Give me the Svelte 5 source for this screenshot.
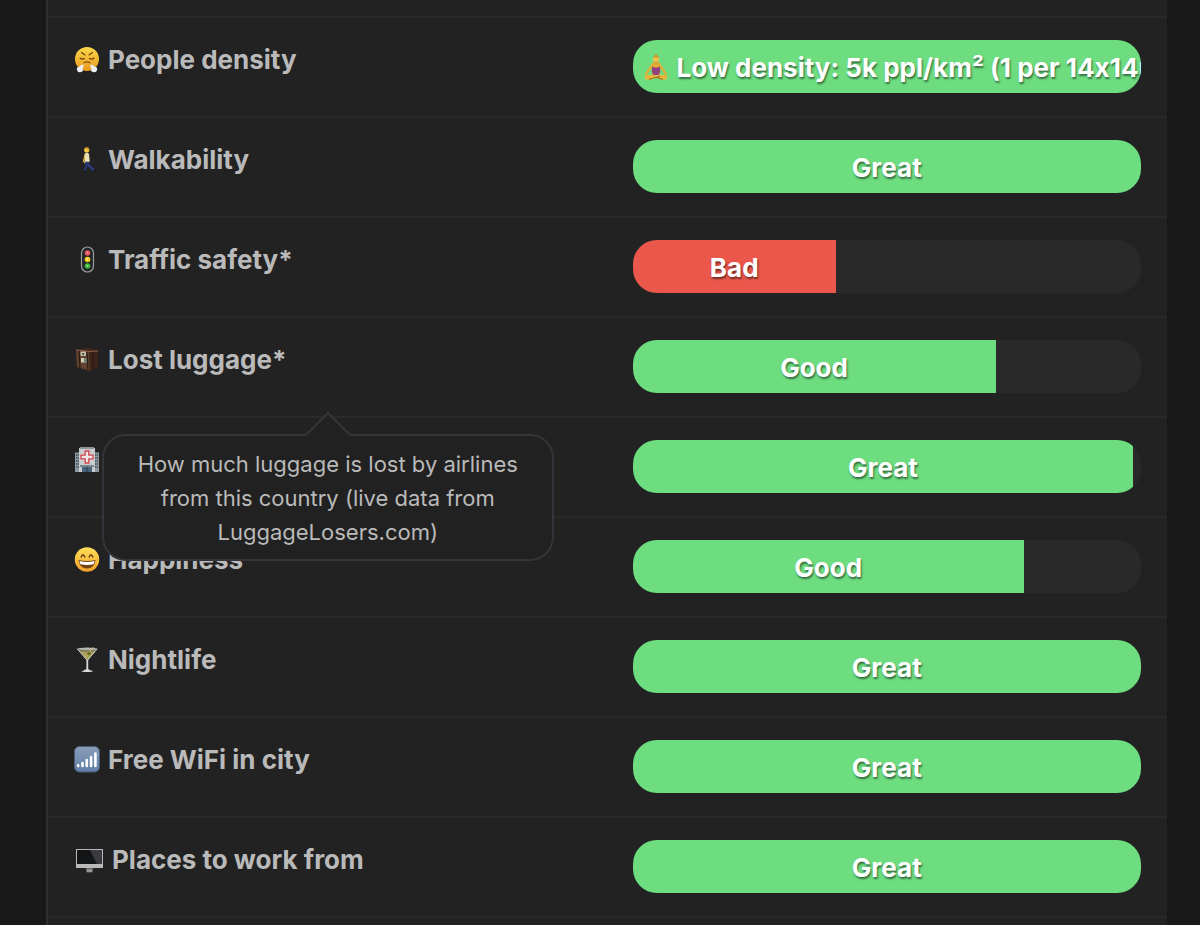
<script>
    // Scores shown in the table; width is the filled part of the bar in percent
    const rows = [
        { icon: "huff", label: "People density", width: 100, color: "green", value: "Low density: 5k ppl/km² (1 per 14x14m)", valueIcon: true },
        { icon: "walk", label: "Walkability", width: 100, color: "green", value: "Great" },
        { icon: "traffic", label: "Traffic safety*", width: 40, color: "red", value: "Bad" },
        {
            icon: "luggage",
            label: "Lost luggage*",
            width: 71.4,
            color: "green",
            value: "Good",
            tip: "How much luggage is lost by airlines from this country (live data from LuggageLosers.com)"
        },
        { icon: "hospital", label: "Healthcare", width: 98.5, color: "green", value: "Great" },
        { icon: "smile", label: "Happiness", width: 77, color: "green", value: "Good" },
        { icon: "cocktail", label: "Nightlife", width: 100, color: "green", value: "Great" },
        { icon: "signal", label: "Free WiFi in city", width: 100, color: "green", value: "Great" },
        { icon: "desktop", label: "Places to work from", width: 100, color: "green", value: "Great" }
    ];
</script>

{#snippet icon(name)}
    <svg class="icon" class:wide={name === "desktop"} viewBox={name === "desktop" ? "0 0 30 28" : "0 0 26 28"} aria-hidden="true">
        {#if name === "huff"}
            <defs>
                <linearGradient id="huff-face" x1="0" y1="0" x2="0" y2="1">
                    <stop offset="0" stop-color="#fbd84a" />
                    <stop offset="1" stop-color="#e9991f" />
                </linearGradient>
            </defs>
            <circle cx="13" cy="13" r="12" fill="url(#huff-face)" />
            <path d="M7.5 6.5 L11 9 M18.5 6.5 L15 9" stroke="#6b3d0c" stroke-width="1.1" stroke-linecap="round" fill="none" />
            <path d="M6 12 Q8 13.8 10.5 12.6 M20 12 Q18 13.8 15.5 12.6" stroke="#6b3d0c" stroke-width="1.1" stroke-linecap="round" fill="none" />
            <path d="M9.5 17 Q13 14.8 16.5 17" stroke="#8a5210" stroke-width="1.2" fill="none" />
            <path d="M9.5 18.5 Q10 21 8.5 22.5 Q10 25.5 7 26 Q3.5 27 3 24 Q2 21 5.5 20.8 Q6 19 9.5 18.5Z" fill="#eceff5" />
            <path d="M16.5 18.5 Q16 21 17.5 22.5 Q16 25.5 19 26 Q22.5 27 23 24 Q24 21 20.5 20.8 Q20 19 16.5 18.5Z" fill="#eceff5" />
        {:else if name === "walk"}
            <path d="M13 14 L14.5 19 L20 24.5" stroke="#2b3f86" stroke-width="2.2" fill="none" />
            <path d="M11.5 14 L12.5 20 L10.5 25" stroke="#26366f" stroke-width="2.4" fill="none" />
            <path d="M10 25.8 H13 M19 25.8 L21.5 24.2" stroke="#17181c" stroke-width="1.4" />
            <path d="M10.5 8 Q13 5.5 15 8 L15.8 15.8 H10.5 Z" fill="#e9dfb8" />
            <path d="M11 9 L9.5 15 L11 17" stroke="#e9bd35" stroke-width="1.2" fill="none" />
            <circle cx="12.7" cy="4" r="2.6" fill="#f3c73c" />
            <path d="M11 2.3 Q13 -.2 15.2 2.5 V4.5 L13.8 3Z" fill="#b98a1d" />
        {:else if name === "traffic"}
            <rect x="7.5" y="1" width="12" height="25" rx="6" fill="#24272a" stroke="#9a9e9c" stroke-width="1.2" />
            <circle cx="13.5" cy="7" r="2.8" fill="#e7505b" />
            <circle cx="13.5" cy="13.5" r="2.8" fill="#f4cc1e" />
            <circle cx="13.5" cy="20" r="2.8" fill="#39b63b" />
            <circle cx="13.5" cy="6.7" r="1" fill="#ff9ea4" />
            <circle cx="13.5" cy="13.2" r="1" fill="#fff08a" />
            <circle cx="13.5" cy="19.7" r="1" fill="#9bea8d" />
        {:else if name === "luggage"}
            <path d="M2 4 L15 2 L24 5 L24 21 L16 25 L3 21 Z" fill="#4a2a1c" />
            <path d="M2 4 L15 5.5 L16 25 L3 21 Z" fill="#60402f" />
            <path d="M15 5.5 L24 5 L24 21 L16 25 Z" fill="#3d2318" />
            <path d="M5 4.5 L6 22 M13 5.5 L14 24.3 M19 5.5 V23.5" stroke="#281711" stroke-width="1.1" />
            <path d="M2 4 L15 5.5 L24 5" stroke="#8b6249" fill="none" />
            <rect x="6.5" y="5.5" width="5.5" height="4.5" rx="1" fill="#c5c2a9" />
            <rect x="8.2" y="7" width="2" height="2" fill="#39524b" />
            <rect x="7" y="12" width="3" height="4.5" fill="#d8cbb6" />
            <rect x="10.2" y="12" width="2.5" height="5" fill="#6b8b78" />
        {:else if name === "hospital"}
            <path d="M1 6.5 H6 V26 H1Z M20 6.5 H25 V26 H20Z" fill="#8d999e" />
            <path d="M2 9 H5 M2 12 H5 M2 15 H5 M2 18 H5 M2 21 H5 M21 9 H24 M21 12 H24 M21 15 H24 M21 18 H24 M21 21 H24" stroke="#3e4d55" stroke-width="1.4" stroke-dasharray="1.2 .6" />
            <path d="M5 2 H21 V26 H5Z" fill="#c9cdd0" />
            <path d="M6 1 H20 V3 H6Z" fill="#8b9498" />
            <path d="M11.2 5 H14.8 V9.2 H19 V12.8 H14.8 V17 H11.2 V12.8 H7 V9.2 H11.2Z" fill="#ebe5e6" stroke="#d64350" stroke-width="1.3" />
            <path d="M8 20 H18 V26 H8Z" fill="#48637b" />
            <path d="M6 19 H20 V21 H6Z" fill="#77858d" />
            <path d="M13 21 V26" stroke="#253746" />
        {:else if name === "smile"}
            <defs>
                <linearGradient id="smile-face" x1="0" y1="0" x2="0" y2="1">
                    <stop offset="0" stop-color="#ffe05a" />
                    <stop offset="1" stop-color="#f0a028" />
                </linearGradient>
            </defs>
            <circle cx="13" cy="13.5" r="12.2" fill="url(#smile-face)" />
            <path d="M7.2 11 Q9 6.5 10.8 11 M15.2 11 Q17 6.5 18.8 11" stroke="#643c12" stroke-width="1.5" stroke-linecap="round" fill="none" />
            <path d="M4.5 14 Q13 16 21.5 14 Q20.5 22.5 13 22.5 Q5.5 22.5 4.5 14Z" fill="#744214" />
            <path d="M5.5 15 Q13 16.8 20.5 15 L20 18 Q13 19.8 6 18Z" fill="#fff" />
        {:else if name === "cocktail"}
            <path d="M3.5 2.8 H23 L13.5 14.5Z" fill="#777661" />
            <path d="M6 5.5 H21 L13.5 14.3Z" fill="#a99e5c" />
            <path d="M3.2 2.8 L13.3 14.5 L23.2 2.8" stroke="#d5d6cc" stroke-width="1" fill="none" />
            <ellipse cx="13.2" cy="2.8" rx="10" ry="1.3" fill="#b5b8ae" />
            <path d="M11 11 L19.5 1" stroke="#d5bd70" stroke-width="1" />
            <ellipse cx="15" cy="7.5" rx="2" ry="1.6" fill="#636a20" />
            <path d="M13.3 14 V24" stroke="#d7d8d5" stroke-width="1.8" />
            <path d="M7 25.2 Q12.5 24 13.3 21.5 Q14 24 19.5 25.2 Q13.3 27 7 25.2Z" fill="#d8d9d7" />
        {:else if name === "signal"}
            <defs>
                <linearGradient id="signal-bg" x1="0" y1="0" x2="0" y2="1">
                    <stop offset="0" stop-color="#8b9db8" />
                    <stop offset="1" stop-color="#5f7fa8" />
                </linearGradient>
            </defs>
            <rect x=".5" y=".5" width="25" height="25.5" rx="5" fill="url(#signal-bg)" stroke="#485c77" />
            <path d="M4.2 20 V19.4 M8.5 20 V17 M12.8 20 V14 M17.1 20 V11 M21.4 20 V7.5" stroke="#fff" stroke-width="2.6" stroke-linecap="round" />
        {:else if name === "desktop"}
            <path d="M2 3 H29 V22 H2Z" fill="#b7b8ba" />
            <path d="M3 4 H28 V18 H3Z" fill="#141517" />
            <path d="M16 4 H28 V18 H23Z" fill="#393b3e" />
            <path d="M12.5 22 H18.5 V26.3 H12.5Z" fill="#96989a" />
            <path d="M12.5 22 H18.5 V23.3 H12.5Z" fill="#626466" />
        {:else if name === "lotus"}
            <path d="M10.5 9 L5 17 L3 20.5 M15.5 9 L21 17 L23 20.5" stroke="#e3ad35" stroke-width="2.2" fill="none" stroke-linecap="round" />
            <path d="M10 9 H16 L17.5 14 L16.5 20.5 H9.5 L8.5 14Z" fill="#e3ad35" />
            <path d="M9.2 12.5 Q13 14.5 16.8 12.5 L17.2 17 L16 21 H10 L8.8 17Z" fill="#94407f" />
            <path d="M11.5 6 H14.5 V10 H11.5Z" fill="#dca02c" />
            <circle cx="13" cy="4.8" r="3.1" fill="#f3c149" />
            <path d="M10 3.8 Q11 1.5 13 1.5 Q16 1.5 16 4.3 Q13 2.4 10 3.8Z" fill="#c69932" />
            <circle cx="13" cy="1.3" r="1.2" fill="#c69932" />
            <path d="M1.5 22.5 Q7 19 13 21.5 Q19 19 24.5 22.5 Q25 25.5 20 26 L13 24 L6 26 Q1 25.5 1.5 22.5Z" fill="#e8b53e" />
            <path d="M6 25.4 L17 22.3 M20 25.4 L13 23.3" stroke="#976c2a" stroke-width="1" />
        {/if}
    </svg>
{/snippet}

<main class="panel">
    <table class="details">
        <tbody>
            {#each rows as row}
                <tr>
                    <th scope="row">
                        <span class="key">{@render icon(row.icon)}<span>{row.label}</span></span>
                        {#if row.tip}
                            <div class="tooltip" role="tooltip">
                                <svg class="arrow" viewBox="0 0 50 26" aria-hidden="true">
                                    <path d="M0 24 H1 Q3 24 4 23 L25 2 L46 23 Q47 24 49 24 H50 V26 H0Z" fill="#212121" />
                                    <path d="M0 24 H1 Q3 24 4 23 L25 2 L46 23 Q47 24 49 24 H50" fill="none" stroke="#34353a" stroke-width="2" />
                                </svg>
                                {row.tip}
                            </div>
                        {/if}
                    </th>
                    <td>
                        <div class="rating">
                            <div class="filling {row.color}" style="width: {row.width}%">
                                {#if row.valueIcon}{@render icon("lotus")}{/if}
                                <span>{row.value}</span>
                            </div>
                        </div>
                    </td>
                </tr>
            {/each}
        </tbody>
    </table>
</main>

<style>
    :global(body) {
        margin: 0;
        background: #191919;
    }

    .panel {
        box-sizing: border-box;
        min-height: 100vh;
        margin: 0 33px 0 46px;
        padding-top: 16px;
        border-left: 2px solid #2f2f33;
        background: #222;
        color: #bababa;
        font-family: Inter, "Liberation Sans", sans-serif;
        font-feature-settings: "calt" 0;
    }

    .details {
        width: 100%;
        table-layout: fixed;
        border-spacing: 0;
        border-bottom: 2px solid #29292a;
    }

    th,
    td {
        padding: 22px 26px 23px;
        border-top: 2px solid #29292a;
        vertical-align: top;
        text-align: left;
    }

    td {
        padding-left: 25px;
    }

    th {
        position: relative;
        font-size: 26px;
        font-weight: 700;
        line-height: 40px;
    }

    .key {
        display: flex;
        align-items: center;
        gap: 8px;
        white-space: nowrap;
    }

    .icon {
        flex: none;
        width: 26px;
        height: 28px;
    }

    .icon.wide {
        width: 30px;
    }

    .rating {
        height: 53px;
        border-radius: 24px;
        background: #292929;
        overflow: hidden;
    }

    .filling {
        box-sizing: border-box;
        display: flex;
        align-items: center;
        justify-content: safe center;
        gap: 8px;
        height: 100%;
        padding: 2px 10px 0;
        color: #fff;
        font-size: 26px;
        font-weight: 700;
        white-space: nowrap;
        text-shadow: 1px 2px 2px rgba(0, 0, 0, 0.5);
    }

    .green {
        background: #6ddd80;
    }

    .red {
        background: #eb574b;
    }

    .tooltip {
        position: absolute;
        z-index: 1;
        top: 116px;
        left: 50%;
        box-sizing: border-box;
        width: 452px;
        padding: 11px 24px 10px;
        border: 2px solid #34353a;
        border-radius: 24px;
        background: #212121;
        transform: translateX(-50%);
        font-size: 22px;
        font-weight: 400;
        line-height: 34px;
        text-align: center;
    }

    .arrow {
        position: absolute;
        bottom: 100%;
        left: 50%;
        width: 50px;
        height: 26px;
        margin: 0 0 -1px -25px;
    }
</style>
